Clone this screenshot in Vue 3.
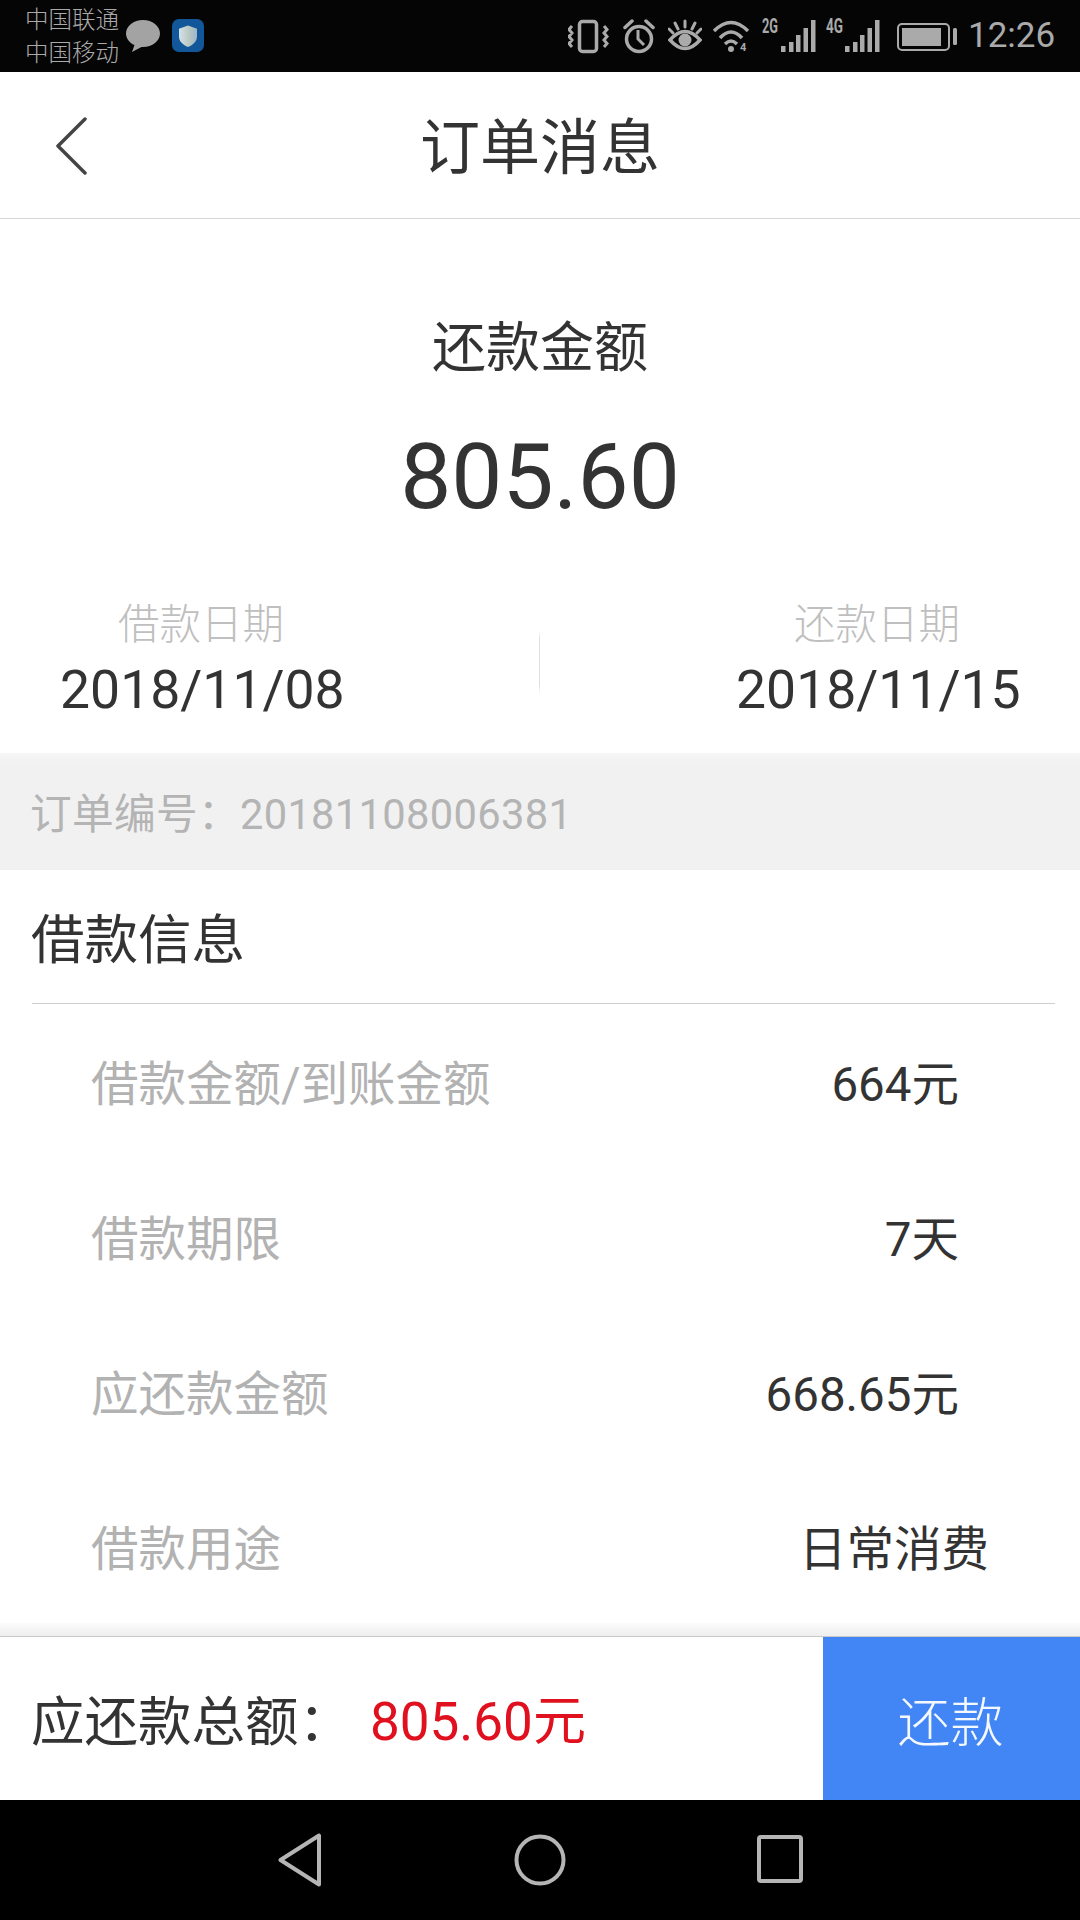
<script setup>
const rows = [
  { label: '借款金额/到账金额', value: '664元' },
  { label: '借款期限', value: '7天' },
  { label: '应还款金额', value: '668.65元' },
  { label: '借款用途', value: '日常消费', wide: true },
]
const dates = [
  { label: '借款日期', value: '2018/11/08' },
  { label: '还款日期', value: '2018/11/15' },
]
</script>

<template>
  <div class="page">
    <header class="status">
      <div class="status-left">
        <div class="carriers">
          <span>中国联通</span>
          <span>中国移动</span>
        </div>
        <svg class="bubble" width="34" height="34" viewBox="0 0 34 34">
          <path d="M17 1C7.600 1 0 7 0 14.500c0 5 3.400 9.300 8.500 11.600L6 33l9.500-5.100c.5 0 1 .1 1.500.1 9.400 0 17-6 17-13.500S26.400 1 17 1z" fill="#a3a3a3" />
        </svg>
        <svg class="shield" width="32" height="34" viewBox="0 0 32 34">
          <defs>
            <linearGradient id="sg" x1="0" x2="1" y1="0" y2="0">
              <stop offset="0" stop-color="#d5e2ea" />
              <stop offset="0.55" stop-color="#b9c9c2" />
              <stop offset="1" stop-color="#9fb6cc" />
            </linearGradient>
          </defs>
          <rect x="0" y="0" width="32" height="33" rx="7" fill="#11579a" />
          <path d="M16 6.500l9 3.200v7.800c0 5-4 8.400-9 10.500-5-2.100-9-5.500-9-10.500V9.700z" fill="url(#sg)" />
        </svg>
      </div>
      <div class="status-right">
        <svg class="s-vib" width="41" height="36" viewBox="0 0 41 36" fill="none" stroke="#aaa">
          <rect x="11.500" y="3.500" width="17" height="30" rx="3" stroke-width="3.500" />
          <path d="M4 8l-3 3.500 3 3.500-3 3.500 3 3.500-3 3.500 3 3.500M36 8l3 3.500-3 3.500 3 3.500-3 3.500 3 3.500-3 3.500" stroke-width="3" />
        </svg>
        <svg class="s-alarm" width="32" height="36" viewBox="0 0 32 36" fill="none" stroke="#aaa" stroke-width="3.500">
          <circle cx="16" cy="21" r="12.500" />
          <path d="M15 12v9l6 6" stroke-width="3" />
          <path d="M2 9.500L9 3M30 9.500L23 3" stroke-linecap="round" />
        </svg>
        <svg class="s-eye" width="34" height="36" viewBox="0 0 34 36" fill="none" stroke="#aaa" stroke-width="3.500">
          <path d="M2 22Q17 5 32 22Q17 39 2 22Z" />
          <circle cx="17" cy="22" r="6.500" fill="#aaa" stroke="none" />
          <path d="M17 3v6M7 5l3 6M27 5l-3 6M1 11l4 4M33 11l-4 4" stroke-width="3" stroke-linecap="round" />
        </svg>
        <svg class="s-wifi" width="39" height="36" viewBox="0 0 39 36" fill="none" stroke="#aaa" stroke-width="3.500">
          <path d="M1 13Q18-4 35 13M7 20Q18 8 29 20M12 26Q18 20 24 26" />
          <circle cx="18" cy="31" r="3" fill="#aaa" stroke="none" />
          <text x="27" y="33" class="mini" stroke="none">4</text>
        </svg>
        <svg class="s-net" width="54" height="48" viewBox="0 -6 54 48" fill="#aaa">
          <text x="0" y="15" class="net-label" textLength="16" lengthAdjust="spacingAndGlyphs">2G</text>
          <rect x="19" y="28" width="4.500" height="6" />
          <rect x="27" y="24" width="4.500" height="10" />
          <rect x="34" y="17" width="4.500" height="17" />
          <rect x="41.500" y="10" width="4.500" height="24" />
          <rect x="49" y="2" width="4.500" height="32" />
        </svg>
        <svg class="s-net2" width="54" height="48" viewBox="0 -6 54 48" fill="#aaa">
          <text x="0" y="15" class="net-label" textLength="17" lengthAdjust="spacingAndGlyphs">4G</text>
          <rect x="19" y="28" width="4.500" height="6" />
          <rect x="27" y="24" width="4.500" height="10" />
          <rect x="34" y="17" width="4.500" height="17" />
          <rect x="41.500" y="10" width="4.500" height="24" />
          <rect x="49" y="2" width="4.500" height="32" />
        </svg>
        <svg class="s-bat" width="60" height="36" viewBox="0 0 60 36" fill="#aaa">
          <rect x="1" y="6" width="51" height="26" rx="4" fill="none" stroke="#aaa" stroke-width="2" />
          <rect x="5" y="10" width="39" height="18" />
          <rect x="56" y="10" width="4" height="17" rx="1.500" />
        </svg>
        <span class="time">12:26</span>
      </div>
    </header>

    <nav class="nav">
      <svg class="back" width="32" height="58" viewBox="0 0 32 58" fill="none" stroke="#444" stroke-width="3.500" stroke-linecap="round" stroke-linejoin="round">
        <path d="M29 2L2 29l27 27" />
      </svg>
      <h1 class="nav-title">订单消息</h1>
      <span></span>
    </nav>

    <main class="main">
      <section class="summary">
        <div class="sum-label">还款金额</div>
        <div class="sum-amount">805.60</div>
        <div class="dates">
          <div class="date-col">
            <div class="date-label">{{ dates[0].label }}</div>
            <div class="date-value">{{ dates[0].value }}</div>
          </div>
          <div class="date-sep"></div>
          <div class="date-col">
            <div class="date-label">{{ dates[1].label }}</div>
            <div class="date-value">{{ dates[1].value }}</div>
          </div>
        </div>
      </section>

      <div class="order-no">订单编号：20181108006381</div>

      <h2 class="sec-title"><span class="sec-text">借款信息</span></h2>
      <div class="rows">
        <div v-for="r in rows" :key="r.label" class="row">
          <span class="row-label">{{ r.label }}</span>
          <span class="row-value" :class="{ wide: r.wide }">{{ r.value }}</span>
        </div>
      </div>
    </main>

    <footer class="footer">
      <div class="foot-shade"></div>
      <div class="foot-bar">
        <div class="total">
          <span class="total-label">应还款总额：</span>
          <span class="total-value">805.60元</span>
        </div>
        <button class="pay">还款</button>
      </div>
    </footer>

    <div class="softkeys">
      <div class="key">
        <svg width="44" height="54" viewBox="0 0 44 54" fill="none" stroke="#b5b5b5" stroke-width="4" stroke-linejoin="round">
          <path d="M41 2.500v49L2.500 27z" />
        </svg>
      </div>
      <div class="key">
        <svg width="54" height="54" viewBox="0 0 54 54" fill="none" stroke="#b5b5b5" stroke-width="4">
          <circle cx="27" cy="27" r="23.500" />
        </svg>
      </div>
      <div class="key">
        <svg width="46" height="50" viewBox="0 0 46 50" fill="none" stroke="#b5b5b5" stroke-width="4" stroke-linejoin="round">
          <rect x="2" y="2" width="42" height="44" rx="2" />
        </svg>
      </div>
    </div>
  </div>
</template>

<style>
html, body { margin: 0; background: #fff; }
</style>

<style scoped>
.page {
  width: 1080px;
  height: 1920px;
  display: flex;
  flex-direction: column;
  background: #fff;
  overflow: hidden;
  font-family: "Roboto", "Noto Sans CJK SC", sans-serif;
  font-weight: 300;
  color: #333;
}

.status {
  height: 72px;
  flex: none;
  background: #050505;
  display: flex;
  justify-content: space-between;
  align-items: center;
  padding: 0 25px 0 25px;
  color: #aaa;
}
.status-left, .status-right { display: flex; align-items: center; }
.carriers { display: flex; flex-direction: column; font-size: 23.500px; line-height: 33px; width: 94px; white-space: nowrap; padding-top: 2px; }
.bubble { margin-left: 7px; }
.shield { margin-left: 12px; }
.s-alarm { margin-left: 14px; }
.s-eye { margin-left: 13px; }
.s-wifi { margin-left: 11px; }
.s-net { margin-left: 10px; }
.s-net2 { margin-left: 10px; }
.s-bat { margin-left: 17px; }
.time { margin-left: 11px; font-size: 35px; line-height: 40px; font-weight: 400; width: 87px; white-space: nowrap; }
.mini { font-size: 11px; fill: #aaa; font-family: "Roboto", sans-serif; font-weight: 700; }
.net-label { font-size: 20px; fill: #aaa; font-family: "Roboto", sans-serif; font-weight: 700; }

.nav {
  height: 146px;
  flex: none;
  display: grid;
  grid-template-columns: 1fr auto 1fr;
  align-items: center;
  border-bottom: 1px solid #d6d6d6;
}
.back { margin: 2px 0 0 56px; }
.nav-title { margin: 7px 0 0; font-size: 60px; line-height: 80px; font-weight: 400; color: #333; }

.main { flex: 1; min-height: 0; overflow: hidden; }

.summary { height: 534px; padding-top: 100px; box-sizing: border-box; }
.sum-label { font-size: 54px; line-height: 60px; text-align: center; color: #333; font-weight: 400; }
.sum-amount { margin-top: 48px; font-size: 91px; line-height: 100px; text-align: center; color: #333; font-weight: 400; }
.dates { margin-top: 73px; padding: 0 62px 0 60px; display: flex; justify-content: space-between; align-items: flex-start; }
.date-col { width: 282px; text-align: center; }
.date-label { font-size: 41.500px; line-height: 50px; color: #bfbfbf; }
.date-value { margin-top: 10px; font-size: 53.500px; line-height: 60px; color: #333; font-weight: 400; white-space: nowrap; }
.date-sep { width: 1px; height: 64px; margin-top: 30px; background: linear-gradient(transparent, #dedede 15%, #dedede 85%, transparent); }

.order-no {
  height: 117px;
  box-sizing: border-box;
  padding: 0 0 2px 30px;
  display: flex;
  align-items: center;
  font-size: 41.700px;
  color: #b4b4b4;
  font-weight: 400;
  letter-spacing: 0.3px;
  background: linear-gradient(#f6f6f6, #f1f1f1 12px, #f1f1f1);
}

.sec-title {
  margin: 0 25px 0 32px;
  height: 134px;
  box-sizing: border-box;
  padding-bottom: 3px;
  display: flex;
  align-items: center;
  font-size: 53.500px;
  font-weight: 400;
  color: #333;
  border-bottom: 1px solid #cfcfcf;
}
.sec-text { margin-left: -1px; }

.rows { margin-top: -1px; }
.row {
  height: 155px;
  padding: 0 121px 0 91px;
  display: flex;
  justify-content: space-between;
  align-items: center;
  font-size: 47.500px;
}
.row-label { color: #b2b2b2; font-weight: 400; }
.row-value { color: #333; font-weight: 400; }
.row-value.wide { margin-right: -30px; }

.footer { flex: none; }
.foot-shade { height: 13px; background: linear-gradient(#fbfbfb, #eeeeee); border-bottom: 1px solid #c9c9c9; }
.foot-bar { height: 163px; display: flex; justify-content: space-between; align-items: stretch; background: #fff; }
.total { padding: 0 0 3px 31px; display: flex; align-items: center; font-size: 53.500px; font-weight: 400; }
.total-label { width: 339px; color: #333; }
.total-value { color: #e0101f; font-size: 53px; }
.pay {
  width: 257px;
  border: 0;
  padding: 0 2px 0 0;
  background: #4285f4;
  color: #f4f8ff;
  font: inherit;
  font-size: 53px;
}

.softkeys {
  height: 120px;
  flex: none;
  background: #000;
  display: flex;
  justify-content: center;
  align-items: center;
}
.key { width: 240px; display: flex; justify-content: center; align-items: center; }
</style>
